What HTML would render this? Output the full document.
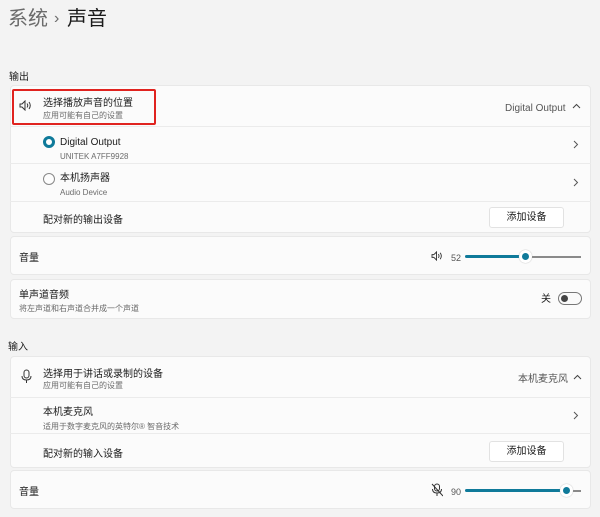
<!DOCTYPE html>
<html><head><meta charset="utf-8"><style>
*{margin:0;padding:0;box-sizing:border-box}
body{width:600px;height:517px;background:#f3f3f3;font-family:"Liberation Sans","Noto Sans CJK SC",sans-serif;color:#1b1b1b;position:relative;overflow:hidden}
.a{position:absolute;white-space:nowrap;line-height:1}
.card{position:absolute;left:10px;width:581px;background:#fbfbfb;border:1px solid #e8e8e8;border-radius:4px}
.sep{position:absolute;left:10px;width:581px;height:1px;background:#ebebeb}
.t{font-size:10px;color:#1b1b1b;margin-top:3px}
.s{font-size:8px;color:#6b6b6b;margin-top:3px}
.r{margin-top:3px}
.btn{position:absolute;width:75px;height:21px;background:#fff;border:1px solid #e2e2e2;border-radius:3px;font-size:10px;text-align:center;line-height:19px}
</style></head><body>
<div class="a" style="left:8px;top:9px;font-size:20px;color:#6b6b6b">系统</div>
<div class="a" style="left:54px;top:11px;font-size:16px;color:#6b6b6b">›</div>
<div class="a" style="left:67px;top:9px;font-size:20px">声音</div>

<div class="a t" style="left:9px;top:70px">输出</div>
<div class="card" style="top:85px;height:148px"></div>
<div class="sep" style="top:126px"></div>
<div class="sep" style="top:163px"></div>
<div class="sep" style="top:201px"></div>
<div class="a" style="left:12px;top:89px;width:144px;height:36px;border:2px solid #e0231f;border-radius:2px"></div>
<svg class="a" style="left:19px;top:100px" width="13" height="11" viewBox="0 0 13 11" fill="none" stroke="#333" stroke-width="1"><path d="M1 4h2l3-3v9L3 7H1z"/><path d="M8 3.5q1.5 2 0 4M10 2q2.5 3.5 0 7"/></svg>
<div class="a t" style="left:43px;top:96px">选择播放声音的位置</div>
<div class="a s" style="left:43px;top:109px">应用可能有自己的设置</div>
<div class="a r" style="left:505px;top:101px;font-size:10px;color:#555">Digital Output</div>
<svg class="a" style="left:572px;top:103px" width="9" height="6"><path d="M1 5l3.5-3.5L8 5" fill="none" stroke="#444"/></svg>

<div class="a" style="left:43px;top:136px;width:12px;height:12px;border-radius:50%;border:3.5px solid #0f7a9a;background:#fff"></div>
<div class="a t" style="left:60px;top:135px">Digital Output</div>
<div class="a s" style="left:60px;top:150px">UNITEK A7FF9928</div>
<svg class="a" style="left:573px;top:140px" width="6" height="9"><path d="M1 1l3.5 3.5L1 8" fill="none" stroke="#555"/></svg>
<div class="a" style="left:43px;top:173px;width:12px;height:12px;border-radius:50%;border:1px solid #888;background:#fdfdfd"></div>
<div class="a t" style="left:60px;top:171px">本机扬声器</div>
<div class="a s" style="left:60px;top:186px">Audio Device</div>
<svg class="a" style="left:573px;top:178px" width="6" height="9"><path d="M1 1l3.5 3.5L1 8" fill="none" stroke="#555"/></svg>
<div class="a t" style="left:43px;top:213px">配对新的输出设备</div>
<div class="btn" style="left:489px;top:207px">添加设备</div>

<div class="card" style="top:236px;height:39px"></div>
<div class="a t" style="left:19px;top:251px">音量</div>
<svg class="a" style="left:431px;top:251px" width="12" height="10" viewBox="0 0 13 11" fill="none" stroke="#333" stroke-width="1"><path d="M1 4h2l3-3v9L3 7H1z"/><path d="M8 3.5q1.5 2 0 4M10 2q2.5 3.5 0 7"/></svg>
<div class="a r" style="left:451px;top:251px;font-size:9px;color:#555">52</div>
<div class="a" style="left:465px;top:255px;width:60px;height:3px;background:#0f7a9a;border-radius:2px"></div>
<div class="a" style="left:525px;top:256px;width:56px;height:2px;background:#8a8a8a"></div>
<div class="a" style="left:519px;top:250px;width:13px;height:13px;border-radius:50%;background:#fff;box-shadow:0 0 1px #999"></div>
<div class="a" style="left:522px;top:253px;width:7px;height:7px;border-radius:50%;background:#0f7a9a"></div>

<div class="card" style="top:279px;height:40px"></div>
<div class="a t" style="left:19px;top:288px">单声道音频</div>
<div class="a s" style="left:19px;top:302px">将左声道和右声道合并成一个声道</div>
<div class="a r" style="left:541px;top:292px;font-size:10px">关</div>
<div class="a" style="left:558px;top:292px;width:24px;height:13px;border-radius:7px;border:1px solid #777;background:#fafafa"></div>
<div class="a" style="left:561px;top:295px;width:7px;height:7px;border-radius:50%;background:#444"></div>

<div class="a t" style="left:8px;top:340px">输入</div>
<div class="card" style="top:356px;height:112px"></div>
<div class="sep" style="top:397px"></div>
<div class="sep" style="top:433px"></div>
<svg class="a" style="left:21px;top:369px" width="11" height="15" fill="none" stroke="#333" stroke-width="1"><rect x="3" y="1" width="5" height="8" rx="2.5"/><path d="M1 7q0 4 4.5 4t4.5-4M5.5 11v3"/></svg>
<div class="a t" style="left:43px;top:367px">选择用于讲话或录制的设备</div>
<div class="a s" style="left:43px;top:379px">应用可能有自己的设置</div>
<div class="a r" style="left:518px;top:372px;font-size:10px;color:#555">本机麦克风</div>
<svg class="a" style="left:573px;top:374px" width="9" height="6"><path d="M1 5l3.5-3.5L8 5" fill="none" stroke="#444"/></svg>
<div class="a t" style="left:43px;top:405px">本机麦克风</div>
<div class="a s" style="left:43px;top:420px">适用于数字麦克风的英特尔® 智音技术</div>
<svg class="a" style="left:573px;top:411px" width="6" height="9"><path d="M1 1l3.5 3.5L1 8" fill="none" stroke="#555"/></svg>
<div class="a t" style="left:43px;top:447px">配对新的输入设备</div>
<div class="btn" style="left:489px;top:441px">添加设备</div>

<div class="card" style="top:470px;height:39px"></div>
<div class="a t" style="left:19px;top:485px">音量</div>
<svg class="a" style="left:431px;top:483px" width="12" height="14" fill="none" stroke="#333" stroke-width="1"><rect x="3.5" y="1" width="5" height="7" rx="2.5"/><path d="M1.5 6q0 4 4.5 4t4.5-4M6 10v3M1 1l11 12"/></svg>
<div class="a r" style="left:451px;top:485px;font-size:9px;color:#555">90</div>
<div class="a" style="left:465px;top:489px;width:101px;height:3px;background:#0f7a9a;border-radius:2px"></div>
<div class="a" style="left:566px;top:490px;width:15px;height:2px;background:#8a8a8a"></div>
<div class="a" style="left:560px;top:484px;width:13px;height:13px;border-radius:50%;background:#fff;box-shadow:0 0 1px #999"></div>
<div class="a" style="left:563px;top:487px;width:7px;height:7px;border-radius:50%;background:#0f7a9a"></div>
</body></html>
